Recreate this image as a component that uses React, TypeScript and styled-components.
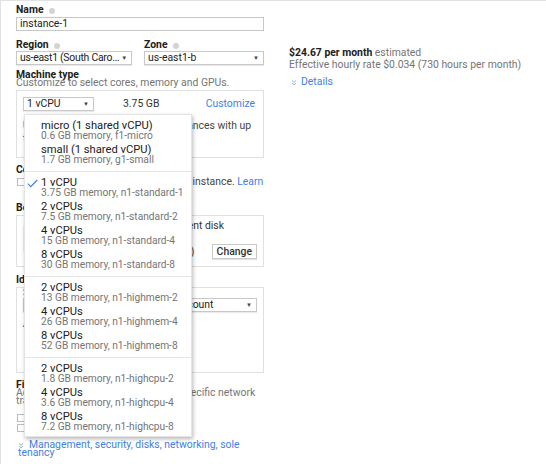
import React from 'react';
import styled, { createGlobalStyle } from 'styled-components';

const Global = createGlobalStyle`
  html, body { margin: 0; padding: 0; background: #fff; }
  body { font-family: Roboto, "Liberation Sans", Arial, sans-serif; color: #212121; }
`;

const BLUE = '#4180e6';
const GRAY = '#757575';
const LINE = '#e0e0e0';
const FS = '10.4px';

const Frame = styled.div`
  width: 546px;
  height: 464px;
  box-sizing: border-box;
  border-top: 1px solid #e2e2e2;
  border-left: 1px solid #e2e2e2;
  display: flex;
  gap: 25px;
  padding: 2px 0 0 15px;
  overflow: hidden;
  font-size: ${FS};
`;

const LeftCol = styled.div`
  width: 248px;
  flex: none;
  display: flex;
  flex-direction: column;
`;

const RightCol = styled.div`
  padding-top: 44px;
  display: flex;
  flex-direction: column;
  line-height: 12px;
`;

const Label = styled.div<{ $mt?: number; $lh?: number }>`
  font-weight: 700;
  line-height: ${(p) => p.$lh ?? 13}px;
  margin-top: ${(p) => p.$mt ?? 0}px;
  display: flex;
  align-items: center;
  gap: 5px;
  white-space: nowrap;
`;

const Help = styled.span`
  width: 6px;
  height: 6px;
  border-radius: 50%;
  background: #d4d4d4;
  display: inline-block;
  margin-top: 3px;
`;

const Helper = styled.div<{ $lh?: number }>`
  color: ${GRAY};
  line-height: ${(p) => p.$lh ?? 8}px;
`;

const TextInput = styled.div`
  height: 14px;
  box-sizing: border-box;
  border: 1px solid #c8c8c8;
  line-height: 12px;
  padding: 0 3px;
  margin-top: 1px;
`;

const Row = styled.div<{ $gap?: number; $mt?: number }>`
  display: flex;
  gap: ${(p) => p.$gap ?? 12}px;
  margin-top: ${(p) => p.$mt ?? 0}px;
`;

const Field = styled.div<{ $w: number }>`
  width: ${(p) => p.$w}px;
  display: flex;
  flex-direction: column;
`;

const Select = styled.div<{ $w?: number; $tight?: boolean }>`
  height: 14px;
  box-sizing: border-box;
  border: 1px solid #c8c8c8;
  box-shadow: 0 1px 1px rgba(0, 0, 0, 0.08);
  line-height: 12px;
  padding: 0 4px 0 3px;
  display: flex;
  align-items: center;
  white-space: nowrap;
  background: #fff;
  letter-spacing: ${(p) => (p.$tight ? '-0.25px' : 'normal')};
  ${(p) => (p.$w ? `width: ${p.$w}px;` : '')}
`;

const SelectText = styled.span`
  flex: 1;
  min-width: 0;
  overflow: hidden;
`;

const Arrow = styled.span`
  flex: none;
  font-size: 6px;
  color: #444;
  margin-left: 2px;
`;

const Box = styled.div<{ $h?: number; $pad?: string; $mt?: number }>`
  border: 1px solid ${LINE};
  box-sizing: border-box;
  padding: ${(p) => p.$pad ?? '6px'};
  margin-top: ${(p) => p.$mt ?? 0}px;
  ${(p) => (p.$h ? `height: ${p.$h}px;` : '')}
  position: relative;
`;

const MachineRow = styled.div`
  display: flex;
  align-items: center;
  line-height: 14px;
`;

const Size = styled.span`
  margin-left: 29px;
  color: #333;
`;

const Link = styled.a`
  color: ${BLUE};
  text-decoration: none;
`;

const RightLink = styled(Link)`
  margin-left: auto;
  margin-right: 2px;
`;

const Para = styled.div<{ $mt?: number; $lh?: number; $dark?: boolean }>`
  color: ${(p) => (p.$dark ? '#212121' : '#444')};
  margin-top: ${(p) => p.$mt ?? 0}px;
  line-height: ${(p) => p.$lh ?? 12}px;
`;

const CheckRow = styled.div<{ $lh?: number; $mt?: number }>`
  display: flex;
  align-items: flex-start;
  gap: 5px;
  margin-top: ${(p) => p.$mt ?? 0}px;
  line-height: ${(p) => p.$lh ?? 12}px;
  color: #444;
`;

const CheckBox = styled.span<{ $mt?: number }>`
  width: 6px;
  height: 6px;
  border: 1px solid #bdbdbd;
  flex: none;
  margin: ${(p) => p.$mt ?? 2}px 0 0 1px;
`;

const DiskBody = styled.div`
  display: flex;
  gap: 12px;
`;

const DiskIcon = styled.div`
  width: 24px;
  height: 30px;
  flex: none;
  border-radius: 3px;
  background: #eceff1;
  margin-top: 4px;
`;

const DiskLines = styled.div`
  flex: 1;
  display: flex;
  flex-direction: column;
`;

const DiskLine = styled.div`
  display: flex;
  align-items: center;
  justify-content: space-between;
  line-height: 12px;
  color: #333;
  white-space: nowrap;
`;

const Button = styled.span`
  border: 1px solid #c8c8c8;
  padding: 0 4px;
  line-height: 13px;
  font-weight: 500;
  color: #333;
  box-shadow: 0 1px 1px rgba(0, 0, 0, 0.1);
`;

const Menu = styled.div`
  position: absolute;
  left: 7px;
  top: 23px;
  width: 168px;
  background: #fff;
  border: 1px solid #e4e4e4;
  box-shadow: 1px 2px 4px rgba(0, 0, 0, 0.28);
  padding: 4px 0 2px;
  box-sizing: border-box;
  z-index: 10;
`;

const Group = styled.div``;

const Sep = styled.div`
  height: 1px;
  background: #e4e4e4;
  margin: 4px 0;
`;

const Item = styled.div`
  display: grid;
  grid-template-columns: 16px 1fr;
  padding: 2px 0;
  line-height: 10px;
`;

const CheckCell = styled.span`
  display: flex;
  justify-content: flex-end;
  padding: 1px 3px 0 0;
`;

const Primary = styled.div`
  color: #212121;
  font-size: 11.2px;
  white-space: nowrap;
`;

const Secondary = styled.div`
  color: ${GRAY};
  font-size: 10.2px;
  white-space: nowrap;
`;

const Price = styled.div`
  color: ${GRAY};
  white-space: nowrap;
  b { color: #212121; font-weight: 700; }
`;

const Details = styled.div`
  margin-top: 5px;
  display: flex;
  align-items: center;
  gap: 4px;
  padding-left: 2px;
`;

const MgmtLink = styled.div`
  margin-top: 8px;
  line-height: 8px;
  color: ${BLUE};
  padding-left: 2px;
  svg { vertical-align: -1px; margin-right: 5px; }
`;

const Chevron = ({ color = '#8aa6d8' }: { color?: string }) => (
  <svg width="6" height="7" viewBox="0 0 6 7" style={{ flex: 'none' }}>
    <path d="M1 1.5 L3 3.3 L5 1.5 M1 4 L3 5.8 L5 4" stroke={color} strokeWidth="0.9" fill="none" />
  </svg>
);

const Tick = () => (
  <svg width="11" height="9" viewBox="0 0 11 9">
    <path d="M0.8 4.6 L3.8 7.6 L10.2 1" stroke={BLUE} strokeWidth="1.2" fill="none" />
  </svg>
);

type Opt = { a: string; b: string; checked?: boolean };
const groups: Opt[][] = [
  [
    { a: 'micro (1 shared vCPU)', b: '0.6 GB memory, f1-micro' },
    { a: 'small (1 shared vCPU)', b: '1.7 GB memory, g1-small' },
  ],
  [
    { a: '1 vCPU', b: '3.75 GB memory, n1-standard-1', checked: true },
    { a: '2 vCPUs', b: '7.5 GB memory, n1-standard-2' },
    { a: '4 vCPUs', b: '15 GB memory, n1-standard-4' },
    { a: '8 vCPUs', b: '30 GB memory, n1-standard-8' },
  ],
  [
    { a: '2 vCPUs', b: '13 GB memory, n1-highmem-2' },
    { a: '4 vCPUs', b: '26 GB memory, n1-highmem-4' },
    { a: '8 vCPUs', b: '52 GB memory, n1-highmem-8' },
  ],
  [
    { a: '2 vCPUs', b: '1.8 GB memory, n1-highcpu-2' },
    { a: '4 vCPUs', b: '3.6 GB memory, n1-highcpu-4' },
    { a: '8 vCPUs', b: '7.2 GB memory, n1-highcpu-8' },
  ],
];

export default function App() {
  return (
    <>
      <Global />
      <Frame>
        <LeftCol>
          <Label>
            Name <Help />
          </Label>
          <TextInput>instance-1</TextInput>

          <Row $gap={12} $mt={7}>
            <Field $w={116}>
              <Label>
                Region <Help />
              </Label>
              <Select $tight>
                <SelectText>us-east1 (South Caro...</SelectText>
                <Arrow>▼</Arrow>
              </Select>
            </Field>
            <Field $w={121}>
              <Label>
                Zone <Help />
              </Label>
              <Select>
                <SelectText>us-east1-b</SelectText>
                <Arrow>▼</Arrow>
              </Select>
            </Field>
          </Row>

          <Label $mt={5} $lh={9}>Machine type</Label>
          <Helper>Customize to select cores, memory and GPUs.</Helper>
          <Box $h={68} $pad="6px" $mt={3}>
            <MachineRow>
              <Select $w={71}>
                <SelectText>1 vCPU</SelectText>
                <Arrow>▼</Arrow>
              </Select>
              <Size>3.75 GB</Size>
              <RightLink>Customize</RightLink>
            </MachineRow>
            <Para $mt={8} $lh={13}>
              Upgrade your account to create instances with up to 96 cores
            </Para>
            <Menu>
              {groups.map((g, gi) => (
                <React.Fragment key={gi}>
                  {gi > 0 && <Sep />}
                  <Group>
                    {g.map((o, i) => (
                      <Item key={i}>
                        <CheckCell>{o.checked ? <Tick /> : null}</CheckCell>
                        <div>
                          <Primary>{o.a}</Primary>
                          <Secondary>{o.b}</Secondary>
                        </div>
                      </Item>
                    ))}
                  </Group>
                </React.Fragment>
              ))}
            </Menu>
          </Box>

          <Label $mt={6} $lh={12}>Container</Label>
          <CheckRow>
            <CheckBox />
            <span>
              Deploy a container image onto this instance. <Link>Learn more</Link>
            </span>
          </CheckRow>

          <Label $mt={2} $lh={12}>Boot disk</Label>
          <Box $h={52} $pad="4px 6px" $mt={1}>
            <DiskBody>
              <DiskIcon />
              <DiskLines>
                <DiskLine>New 10 GB standard persistent disk</DiskLine>
                <DiskLine>Image</DiskLine>
                <DiskLine>
                  <span>Debian GNU/Linux 9 (stretch)</span>
                  <Button>Change</Button>
                </DiskLine>
              </DiskLines>
            </DiskBody>
          </Box>

          <Label $mt={7} $lh={12}>Identity and API access</Label>
          <Box $h={86} $pad="0 6px 6px 6px" $mt={1}>
            <Para $lh={10} $dark>Service account</Para>
            <Select>
              <SelectText>Compute Engine default service account</SelectText>
              <Arrow>▼</Arrow>
            </Select>
            <Para $mt={6} $lh={12} $dark>Access scopes</Para>
          </Box>

          <Label $mt={7} $lh={9}>Firewall</Label>
          <Helper $lh={8}>
            Add tags and firewall rules to allow specific network traffic from the Internet
          </Helper>
          <CheckRow $lh={10} $mt={8}>
            <CheckBox $mt={1} />
            <span>Allow HTTP traffic</span>
          </CheckRow>
          <CheckRow $lh={10}>
            <CheckBox $mt={1} />
            <span>Allow HTTPS traffic</span>
          </CheckRow>

          <MgmtLink>
            <Chevron color="#7f9fd6" />
            Management, security, disks, networking, sole tenancy
          </MgmtLink>
        </LeftCol>

        <RightCol>
          <Price>
            <b>$24.67 per month</b> estimated
          </Price>
          <Price>Effective hourly rate $0.034 (730 hours per month)</Price>
          <Details>
            <Chevron />
            <Link>Details</Link>
          </Details>
        </RightCol>
      </Frame>
    </>
  );
}
